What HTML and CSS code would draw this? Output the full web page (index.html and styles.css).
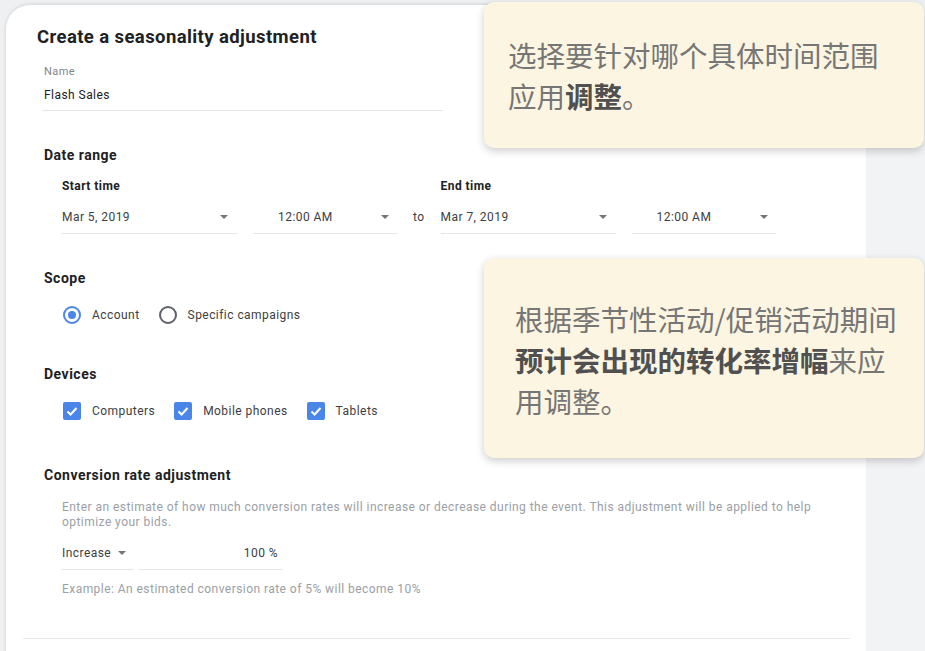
FILE: index.html
```html
<!DOCTYPE html>
<html lang="zh">
<head>
<meta charset="utf-8">
<title>Create a seasonality adjustment</title>
<link rel="stylesheet" href="styles.css">
</head>
<body>
<div class="stage">
  <div class="card">
    <div class="content">
      <h1 class="title">Create a seasonality adjustment</h1>
      <div class="name-field">
        <div class="field-label">Name</div>
        <div class="field-value">Flash Sales</div>
      </div>

      <h2 class="section-title sec-date">Date range</h2>
      <div class="date-range">
        <div class="date-group">
          <div class="sub-label">Start time</div>
          <div class="date-fields">
            <div class="select date-select"><span>Mar 5, 2019</span><i class="arrow"></i></div>
            <div class="select time-select"><span>12:00 AM</span><i class="arrow"></i></div>
          </div>
        </div>
        <div class="to">to</div>
        <div class="date-group">
          <div class="sub-label">End time</div>
          <div class="date-fields">
            <div class="select date-select"><span>Mar 7, 2019</span><i class="arrow"></i></div>
            <div class="select time-select"><span>12:00 AM</span><i class="arrow"></i></div>
          </div>
        </div>
      </div>

      <h2 class="section-title sec-scope">Scope</h2>
      <div class="options">
        <label class="option"><span class="radio checked"></span>Account</label>
        <label class="option"><span class="radio"></span>Specific campaigns</label>
      </div>

      <h2 class="section-title sec-devices">Devices</h2>
      <div class="options">
        <label class="option"><span class="checkbox"><svg viewBox="0 0 18 18" width="18" height="18"><polyline points="4.5,9.5 7.6,12.5 13.5,6" fill="none" stroke="#fff" stroke-width="2"/></svg></span>Computers</label>
        <label class="option"><span class="checkbox"><svg viewBox="0 0 18 18" width="18" height="18"><polyline points="4.5,9.5 7.6,12.5 13.5,6" fill="none" stroke="#fff" stroke-width="2"/></svg></span>Mobile phones</label>
        <label class="option"><span class="checkbox"><svg viewBox="0 0 18 18" width="18" height="18"><polyline points="4.5,9.5 7.6,12.5 13.5,6" fill="none" stroke="#fff" stroke-width="2"/></svg></span>Tablets</label>
      </div>

      <h2 class="section-title sec-cra">Conversion rate adjustment</h2>
      <p class="desc">Enter an estimate of how much conversion rates will increase or decrease during the event. This adjustment will be applied to help optimize your bids.</p>
      <div class="adjust-row">
        <div class="select inc-select"><span>Increase</span><i class="arrow"></i></div>
        <div class="select pct">100 %</div>
      </div>
      <p class="example">Example: An estimated conversion rate of 5% will become 10%</p>
    </div>
    <div class="divider"></div>
  </div>
  <div class="side"></div>
</div>

<div class="callout callout-1">选择要针对哪个具体时间范围<br>应用<b>调整</b>。</div>
<div class="callout callout-2">根据季节性活动/促销活动期间<br><b>预计会出现的转化率增幅</b>来应<br>用调整。</div>
</body>
</html>
```

FILE: styles.css
```css
html, body {
  margin: 0;
  padding: 0;
}

body {
  width: 925px;
  height: 651px;
  overflow: hidden;
  position: relative;
  background: #eef0f2;
  font-family: Roboto, "Liberation Sans", "Noto Sans CJK SC", sans-serif;
  color: #202124;
}

.stage {
  display: flex;
  padding: 5px 0 0 6px;
  height: 100%;
  box-sizing: border-box;
}

.card {
  width: 860px;
  flex: none;
  min-height: 700px;
  background: #fff;
  border-radius: 24px 24px 0 0;
  box-shadow: 0 0 4px rgba(0, 0, 0, 0.12), 2px 0 4px rgba(0, 0, 0, 0.08);
  padding: 22px 16px 0 17px;
  box-sizing: border-box;
}

.side {
  flex: 1;
  background: #f1f3f4;
}

.content {
  padding-left: 21px;
  letter-spacing: 0.45px;
}

.title {
  margin: 0 0 0 -7px;
  font-size: 18.5px;
  line-height: 20px;
  font-weight: 700;
  letter-spacing: 0.4px;
  color: #202124;
}

.name-field {
  margin: 18px 0 0 -2px;
  padding-left: 2px;
  width: 399px;
  padding-bottom: 7px;
  border-bottom: 1px solid #e6e6e6;
}

.field-label {
  font-size: 11px;
  line-height: 14px;
  letter-spacing: 0.4px;
  color: #80868b;
}

.field-value {
  margin-top: 8px;
  font-size: 12px;
  line-height: 16px;
  color: #202124;
}

.section-title {
  margin: 35px 0 0;
  font-size: 14px;
  line-height: 18px;
  font-weight: 700;
  letter-spacing: 0.5px;
  color: #202124;
}

.sec-devices { margin-top: 40px; }
.sec-cra { margin-top: 45px; }

.date-range {
  margin: 15px 0 0 18px;
  display: flex;
  align-items: flex-end;
  gap: 16px;
}

.date-group {
  width: 335px;
  flex: none;
}

.sub-label {
  font-size: 12px;
  line-height: 14px;
  font-weight: 700;
  color: #202124;
}

.date-fields {
  display: flex;
  gap: 16px;
  margin-top: 16px;
}

.select {
  display: flex;
  align-items: center;
  justify-content: space-between;
  border-bottom: 1px solid #e6e6e6;
  padding-bottom: 8px;
  font-size: 12px;
  line-height: 16px;
  color: #3c4043;
  box-sizing: border-box;
}

.date-select {
  width: 175px;
  padding-right: 9px;
}

.time-select {
  width: 144px;
  padding-left: 25px;
  padding-right: 8px;
}

.arrow {
  width: 0;
  height: 0;
  border-left: 4px solid transparent;
  border-right: 4px solid transparent;
  border-top: 4px solid #757575;
}

.to {
  font-size: 12px;
  line-height: 16px;
  padding-bottom: 9px;
  color: #3c4043;
}

.options {
  display: flex;
  align-items: center;
  height: 20px;
  margin-top: 18px;
  padding-left: 19px;
}

.option {
  display: flex;
  align-items: center;
  gap: 11px;
  margin-right: 19px;
  font-size: 12px;
  color: #3c4043;
}

.radio {
  width: 18px;
  height: 18px;
  border: 2px solid #5f6368;
  border-radius: 50%;
  box-sizing: border-box;
  display: flex;
  align-items: center;
  justify-content: center;
}

.radio.checked {
  border-color: #4a86e8;
}

.radio.checked::after {
  content: "";
  width: 8px;
  height: 8px;
  border-radius: 50%;
  background: #4a86e8;
}

.checkbox {
  width: 18px;
  height: 18px;
  border-radius: 2px;
  background: #4a86e8;
  display: flex;
}

.desc {
  margin: 16px 0 0 18px;
  width: 760px;
  font-size: 12px;
  line-height: 15px;
  color: #9aa0a6;
}

.adjust-row {
  display: flex;
  gap: 5px;
  margin: 15px 0 0 18px;
}

.inc-select {
  width: 72px;
  justify-content: flex-start;
  gap: 7px;
}

.pct {
  width: 143px;
  justify-content: flex-end;
  padding-right: 4px;
}

.example {
  margin: 12px 0 0 18px;
  font-size: 12px;
  line-height: 15px;
  color: #9aa0a6;
}

.divider {
  height: 1px;
  background: #e8eaed;
  margin-top: 41px;
}

.callout {
  position: absolute;
  left: 484px;
  width: 440px;
  background: #fcf5e1;
  border-radius: 10px;
  box-shadow: 0 3px 8px rgba(0, 0, 0, 0.2);
  font-family: "Noto Sans CJK SC", sans-serif;
  font-size: 28.5px;
  line-height: 41px;
  color: #767676;
  box-sizing: border-box;
  white-space: nowrap;
}

.callout b {
  font-weight: 700;
  color: #505050;
}

.callout-1 {
  top: 2px;
  height: 146px;
  padding: 32px 0 0 24px;
}

.callout-2 {
  top: 258px;
  height: 200px;
  padding: 40px 0 0 31px;
}
```
